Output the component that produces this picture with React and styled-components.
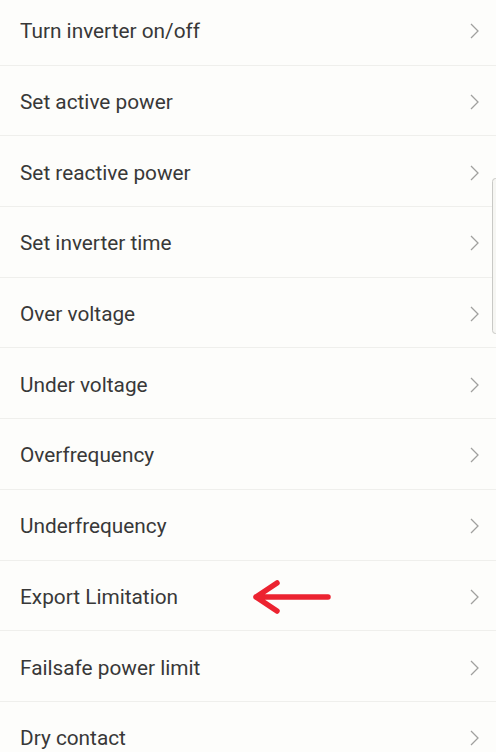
import React from "react";
import styled, { createGlobalStyle } from "styled-components";

const Global = createGlobalStyle`
  html, body { margin: 0; padding: 0; background: #fdfdfb; }
  body { font-family: Roboto, "Noto Sans", Arial, sans-serif; overflow: hidden; }
`;

const Screen = styled.div`
  position: relative;
  width: 496px;
  height: 752px;
  overflow: hidden;
  background: #fdfdfb;
`;

const List = styled.ul`
  list-style: none;
  margin: -5px 0 0 0;
  padding: 0;
`;

const Row = styled.li`
  height: 70.7px;
  box-sizing: border-box;
  display: flex;
  align-items: center;
  padding: 3px 17px 0 20px;
  border-bottom: 1px solid #efefec;
`;

const Label = styled.span`
  flex: 1;
  font-size: 20.8px;
  color: #383838;
`;

const Marker = styled.svg`
  width: 80px;
  height: 36px;
  margin-right: 138px;
  flex: none;
`;

const Chevron = styled.svg`
  width: 9px;
  height: 16px;
  flex: none;
`;

const Scrollbar = styled.div`
  position: absolute;
  right: -3px;
  top: 178px;
  width: 5px;
  height: 154px;
  border: 1px solid #c9c9c6;
  border-radius: 4px;
  background: #f6f6f3;
`;

const items = [
  "Turn inverter on/off",
  "Set active power",
  "Set reactive power",
  "Set inverter time",
  "Over voltage",
  "Under voltage",
  "Overfrequency",
  "Underfrequency",
  "Export Limitation",
  "Failsafe power limit",
  "Dry contact",
];

export default function App() {
  return (
    <Screen>
      <Global />
      <List>
        {items.map((t) => (
          <Row key={t}>
            <Label>{t}</Label>
            {t === "Export Limitation" && (
              <Marker viewBox="0 0 80 36">
                <path
                  d="M4 18 H76 M4 18 L25 4 M4 18 L25 32"
                  fill="none"
                  stroke="#ec2330"
                  strokeWidth="5.5"
                  strokeLinecap="round"
                  strokeLinejoin="round"
                />
              </Marker>
            )}
            <Chevron viewBox="0 0 9 16">
              <path d="M1 1 L8 8 L1 15" fill="none" stroke="#a0a09e" strokeWidth="1.3" />
            </Chevron>
          </Row>
        ))}
      </List>
      <Scrollbar />
    </Screen>
  );
}
